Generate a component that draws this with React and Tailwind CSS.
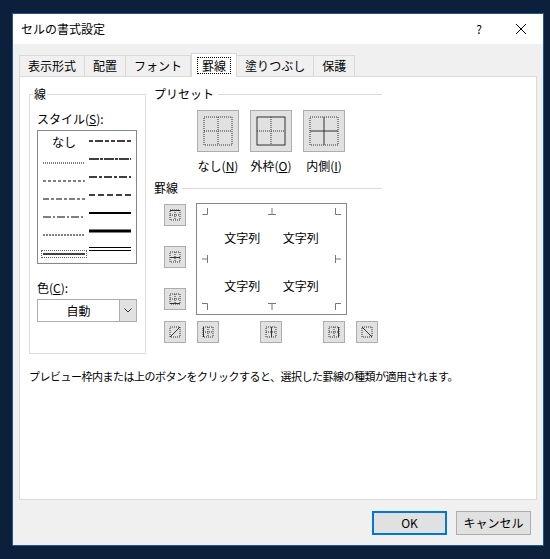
import React from "react";

const font = { fontFamily: '"Noto Sans CJK JP", "Noto Sans", sans-serif' };

// little border-button icons
const Dot = ({ d }) => <path d={d} stroke="#333" strokeDasharray="1 1" fill="none" />;
const Solid = ({ d, w = 1 }) => <path d={d} stroke="#333" strokeWidth={w} fill="none" />;

const SmallBtn = ({ children }) => (
  <div className="w-[22px] h-[22px] bg-[#e1e1e1] border border-[#adadad] flex items-center justify-center">
    <svg width="14" height="14" viewBox="0 0 14 14">{children}</svg>
  </div>
);

const PresetBtn = ({ outer, inner }) => (
  <div className="w-[42px] h-[42px] bg-[#e1e1e1] border border-[#adadad] flex items-center justify-center">
    <svg width="30" height="30" viewBox="0 0 30 30">
      {outer ? <rect x="1" y="1" width="28" height="28" stroke="#333" fill="none" /> : <Dot d="M1 1H29V29H1Z" />}
      {inner ? <Solid d="M15 1V29M1 15H29" /> : <Dot d="M15 1V29M1 15H29" />}
    </svg>
  </div>
);

const Line = ({ dash, w = 1, dbl }) => (
  <svg width="42" height="6" viewBox="0 0 42 6">
    {dbl ? (
      <path d="M0 1.5H42M0 4.5H42" stroke="#000" />
    ) : (
      <path d="M0 3H42" stroke="#000" strokeWidth={w} strokeDasharray={dash} />
    )}
  </svg>
);

const Corner = ({ className, d }) => (
  <svg className={`absolute ${className}`} width="8" height="8" viewBox="0 0 8 8">
    <path d={d} stroke="#777" fill="none" />
  </svg>
);

export default function App() {
  return (
    <div className="w-[550px] h-[559px] bg-[#0c1f3b] pt-[13px] pl-[12px]" style={font}>
      <div className="w-[532px] h-[533px] bg-[#f0f0f0] border border-[#1d5a94] flex flex-col text-[12px] text-black">
        {/* title */}
        <div className="h-[30px] bg-white flex items-center pl-[8px] text-[12px]">
          <span className="flex-1">セルの書式設定</span>
          <span className="w-[20px] text-center mr-[26px]">?</span>
          <svg width="12" height="12" viewBox="0 0 12 12" className="mr-[16px]">
            <path d="M1 1L11 11M11 1L1 11" stroke="#000" />
          </svg>
        </div>

        {/* tabs */}
        <div className="flex items-end h-[32px] pl-[7px]">
          {["表示形式", "配置", "フォント", "罫線", "塗りつぶし", "保護"].map((t, i) =>
            i === 3 ? (
              <div key={t} className="h-[24px] px-[5px] bg-white border border-b-0 border-[#d9d9d9] -mb-px relative z-10 flex items-center">
                <span className="border border-dotted border-black px-[4px] leading-[15px]">{t}</span>
              </div>
            ) : (
              <div key={t} className="h-[21px] px-[8px] bg-[#f0f0f0] border border-b-0 border-[#d9d9d9] flex items-center -ml-px">
                {t}
              </div>
            )
          )}
        </div>

        {/* panel */}
        <div className="mx-[6px] w-[518px] h-[424px] bg-white border border-[#d9d9d9] relative">
          <div className="flex pt-[17px] pl-[9px]">
            {/* 線 */}
            <div className="w-[117px] h-[260px] border border-[#dcdcdc] relative px-[7px]">
              <span className="absolute -top-[10px] left-[3px] bg-white px-[1px]">線</span>
              <div className="mt-[15px]">
                スタイル(<u>S</u>):
              </div>
              <div className="mt-[2px] w-[100px] h-[134px] border border-[#828790] grid grid-cols-2 px-[3px] pt-[3px]">
                <div className="flex flex-col gap-[12px] pt-[2px] items-center">
                  <span className="leading-[12px]">なし</span>
                  <Line dash="1 1" />
                  <Line dash="3 2" />
                  <Line dash="6 2 3 2" />
                  <Line dash="8 2 2 2" />
                  <Line dash="2 1" />
                  <div className="border border-dotted border-[#666] px-[1px]"><Line w={1.3} /></div>
                </div>
                <div className="flex flex-col gap-[12px] pt-[4px] items-center">
                  <Line dash="4 2 8 2 4 2" w={1.5} />
                  <Line dash="10 1 3 1" w={1.5} />
                  <Line dash="8 2 3 2" w={1.5} />
                  <Line dash="6 3" w={1.5} />
                  <Line w={2} />
                  <Line w={3} />
                  <Line dbl />
                </div>
              </div>
              <div className="mt-[15px]">
                色(<u>C</u>):
              </div>
              <div className="mt-[2px] w-[100px] h-[23px] border border-[#adadad] flex">
                <div className="flex-1 flex items-center justify-center">自動</div>
                <div className="w-[17px] bg-[#e1e1e1] border-l border-[#adadad] flex items-center justify-center">
                  <svg width="8" height="5" viewBox="0 0 8 5"><path d="M0.5 0.5L4 4L7.5 0.5" stroke="#333" fill="none" /></svg>
                </div>
              </div>
            </div>

            {/* right side */}
            <div className="ml-[8px] w-[228px]">
              <div className="flex items-center -mt-[9px]">
                <span>プリセット</span>
                <div className="flex-1 h-px bg-[#dcdcdc] ml-[4px]" />
              </div>
              <div className="flex gap-[11px] ml-[43px] mt-[7px]">
                <div className="flex flex-col items-center w-[42px]">
                  <PresetBtn />
                  <span className="mt-[5px] whitespace-nowrap">なし(<u>N</u>)</span>
                </div>
                <div className="flex flex-col items-center w-[42px]">
                  <PresetBtn outer />
                  <span className="mt-[5px] whitespace-nowrap">外枠(<u>O</u>)</span>
                </div>
                <div className="flex flex-col items-center w-[42px]">
                  <PresetBtn inner />
                  <span className="mt-[5px] whitespace-nowrap">内側(<u>I</u>)</span>
                </div>
              </div>
              <div className="flex items-center mt-[4px]">
                <span>罫線</span>
                <div className="flex-1 h-px bg-[#dcdcdc] ml-[4px]" />
              </div>
              <div className="flex mt-[6px] ml-[10px]">
                <div className="flex flex-col gap-[20px] pt-[1px]">
                  <SmallBtn><Dot d="M2 2H12V12H2ZM7 2V12M2 7H12" /><Solid d="M2 2.5H12" /></SmallBtn>
                  <SmallBtn><Dot d="M2 2H12V12H2ZM7 2V12" /><Solid d="M2 7.5H12" /></SmallBtn>
                  <SmallBtn><Dot d="M2 2H12V12H2ZM7 2V12M2 7H12" /><Solid d="M2 11.5H12" /></SmallBtn>
                </div>
                <div className="ml-[10px] w-[151px] h-[112px] border border-[#828790] relative">
                  <Corner className="left-[5px] top-[4px]" d="M0.5 6.5H5.5V0" />
                  <Corner className="left-[71px] top-[4px]" d="M4 0V6M0 6.5H8" />
                  <Corner className="right-[5px] top-[4px]" d="M2.5 0V6.5H8" />
                  <Corner className="left-[5px] top-[51px]" d="M0 4H6M5.5 0V8" />
                  <Corner className="right-[5px] top-[51px]" d="M2 4H8M2.5 0V8" />
                  <Corner className="left-[5px] bottom-[4px]" d="M0 1.5H5.5V8" />
                  <Corner className="left-[71px] bottom-[4px]" d="M4 2V8M0 1.5H8" />
                  <Corner className="right-[5px] bottom-[4px]" d="M2.5 8V1.5H8" />
                  <div className="grid grid-cols-2 pt-[25px] px-[16px] gap-y-[30px] text-center">
                    <span>文字列</span><span>文字列</span><span>文字列</span><span>文字列</span>
                  </div>
                </div>
              </div>
              <div className="flex mt-[6px] ml-[10px]">
                <SmallBtn><Dot d="M2 2H12V12H2Z" /><Solid d="M2 12L12 2" /></SmallBtn>
                <div className="ml-[11px]"><SmallBtn><Dot d="M2 2H12V12H2ZM7 2V12M2 7H12" /><Solid d="M2.5 2V12" /></SmallBtn></div>
                <div className="ml-[41px]"><SmallBtn><Dot d="M2 2H12V12H2ZM2 7H12" /><Solid d="M7.5 2V12" /></SmallBtn></div>
                <div className="ml-[41px]"><SmallBtn><Dot d="M2 2H12V12H2ZM7 2V12M2 7H12" /><Solid d="M11.5 2V12" /></SmallBtn></div>
                <div className="ml-[11px]"><SmallBtn><Dot d="M2 2H12V12H2Z" /><Solid d="M2 2L12 12" /></SmallBtn></div>
              </div>
            </div>
          </div>
          <p className="mt-[14px] ml-[9px] text-[11px] tracking-[-0.5px]">
            プレビュー枠内または上のボタンをクリックすると、選択した罫線の種類が適用されます。
          </p>
        </div>

        {/* buttons */}
        <div className="flex justify-end gap-[9px] mt-[11px] mr-[12px]">
          <div className="w-[75px] h-[24px] bg-[#e1e1e1] border-2 border-[#0078d7] flex items-center justify-center">OK</div>
          <div className="w-[75px] h-[24px] bg-[#e1e1e1] border border-[#adadad] flex items-center justify-center">キャンセル</div>
        </div>
      </div>
    </div>
  );
}
